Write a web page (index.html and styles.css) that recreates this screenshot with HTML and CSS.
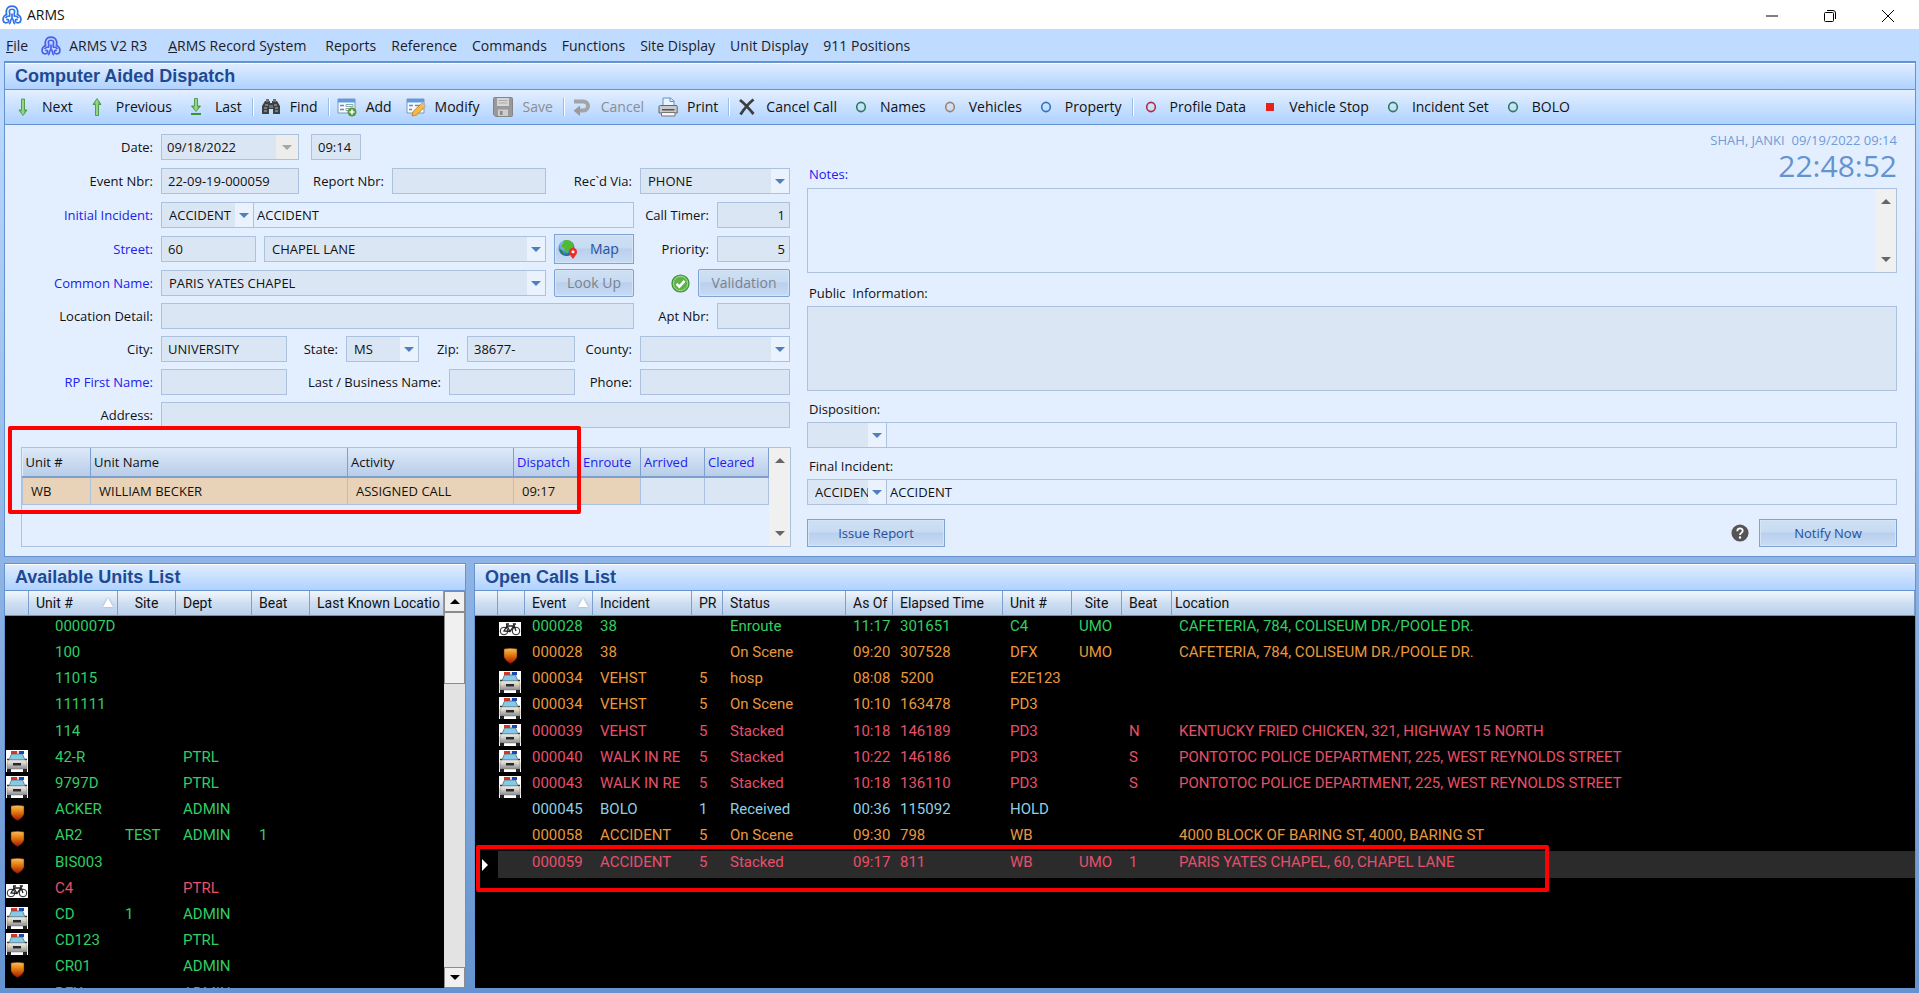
FILE: index.html
```html
<!DOCTYPE html>
<html lang="en">
<head>
    <meta charset="UTF-8">
    <meta name="viewport" content="width=device-width, initial-scale=1.0">
    <title>ARMS</title>
    <link rel="stylesheet" href="styles.css">
</head>
<body>
    <!-- icon sprites -->
    <svg class="sprites" aria-hidden="true">
        <defs>
            <linearGradient id="gShield" x1="0" y1="0" x2="0" y2="1">
                <stop offset="0" stop-color="#ffc05a"/><stop offset=".45" stop-color="#e07a10"/><stop offset="1" stop-color="#a81000"/>
            </linearGradient>
            <linearGradient id="gGreen" x1="0" y1="0" x2="1" y2="0">
                <stop offset="0" stop-color="#3f9c3a"/><stop offset=".5" stop-color="#a5dc8e"/><stop offset="1" stop-color="#2f8a2c"/>
            </linearGradient>
            <linearGradient id="gCar" x1="0" y1="0" x2="0" y2="1">
                <stop offset="0" stop-color="#f4f4f4"/><stop offset="1" stop-color="#8e8e8e"/>
            </linearGradient>
            <radialGradient id="gGlobe" cx=".4" cy=".3" r=".8">
                <stop offset="0" stop-color="#bfe3ff"/><stop offset=".6" stop-color="#3a8ad6"/><stop offset="1" stop-color="#0f4580"/>
            </radialGradient>
        </defs>
        <symbol id="logo" viewBox="0 0 20 20">
            <g fill="none" stroke="currentColor" stroke-width="1.7" stroke-linecap="round">
                <path d="M4.500 9.500C3.300 4 6 1.200 10 1.200S16.700 4 15.500 9.500"/>
                <path d="M7.500 11C8.500 8.500 7 7.500 7.500 5.500 8 3.800 12 3.800 12.500 5.500 13 7.500 11.500 8.500 12.500 11"/>
                <path d="M4.500 9.500C2 10.500 .8 13 1.200 15.500c.5 2.500 3.500 3 5 1.500 1-1.200.2-3-1.200-2.500"/>
                <path d="M15.500 9.500c2.500 1 3.700 3.500 3.300 6-.5 2.500-3.500 3-5 1.500-1-1.200-.2-3 1.200-2.500"/>
                <path d="M7.500 11C5.500 11 4.500 11.500 4 12.500M12.500 11c2 0 3 .5 3.500 1.500"/>
                <path d="M10 9v4.500M10 13.500C8 14 9 17.500 7.500 18.500M10 13.500c2 .5 1 4 2.500 5"/>
            </g>
        </symbol>
        <symbol id="down" viewBox="0 0 20 20"><path d="M8.500 2h3v11h2.500L10 18.500 6 13h2.500z" fill="url(#gGreen)" stroke="#3b9138" stroke-width=".8"/></symbol>
        <symbol id="up" viewBox="0 0 20 20"><path d="M8.500 18.500h3V7.500H14L10 1.500 6 7.500h2.500z" fill="url(#gGreen)" stroke="#3b9138" stroke-width=".8"/></symbol>
        <symbol id="last" viewBox="0 0 20 20"><path d="M8.500 1.500h3V9H14.500L10 14.500 5.500 9h3z" fill="url(#gGreen)" stroke="#3b9138" stroke-width=".8"/><path d="M5 16h10v2H5z" fill="#3b9138"/></symbol>
        <symbol id="find" viewBox="0 0 20 20">
            <path d="M4 4h5v2h2V4h5l3 5v8h-7v-5H8v5H1V9z" fill="#3c4043"/>
            <path d="M5 2h3v3H5zM12 2h3v3h-3zM8 8h4v3H8z" fill="#6d7276"/>
            <path d="M4 8h3M13 8h3M3 11h3M14 11h3M3 14h3M14 14h3" stroke="#b4b9bd" stroke-width="1.200"/>
        </symbol>
        <symbol id="add" viewBox="0 0 20 20">
            <path d="M1 2h17v14H1z" fill="#f7faff" stroke="#7a96bb"/><path d="M1 2h17v3.500H1z" fill="#5f9be0"/>
            <path d="M3 8.500h4M3 12.500h4" stroke="#7089ad" stroke-width="1.500"/><path d="M9 7.500h7v2H9zM9 11.500h4v2H9z" fill="#fff" stroke="#8aa"/>
            <circle cx="15" cy="15" r="4.500" fill="#5a9a3e"/><path d="M15 12.500v5M12.500 15h5" stroke="#fff" stroke-width="1.700"/>
        </symbol>
        <symbol id="modify" viewBox="0 0 20 20">
            <path d="M1 2h17v14H1z" fill="#f7faff" stroke="#7a96bb"/><path d="M1 2h17v3.500H1z" fill="#5f9be0"/>
            <path d="M3 8.500h4M3 12.500h3M9 8.500h5" stroke="#7089ad" stroke-width="1.500"/>
            <path d="M6 19l1.200-4.500L16 6l3.500 3.200L10.500 18z" fill="#f6bb3e" stroke="#b9771b" stroke-width=".8"/><path d="M16 6l3.500 3.200-1.600 1.500L14.400 7.500z" fill="#e9b7a0"/>
        </symbol>
        <symbol id="save" viewBox="0 0 20 20">
            <path d="M.5 1.500Q.5.500 1.500.5h17q1 0 1 1v17q0 1-1 1h-16l-2-2z" fill="#999" stroke="#858585"/><path d="M4 1h12v8H4z" fill="#d6d6d6"/><path d="M5.500 3.500h9M5.500 6h9" stroke="#aaa"/><path d="M5 12.500h10V19H5z" fill="#ccc"/><path d="M7 14h2.500v4H7z" fill="#888"/>
        </symbol>
        <symbol id="undo" viewBox="0 0 20 20"><path d="M2 4.500h9.500a4.500 4.500 0 0 1 0 9H7" fill="none" stroke="#a3a3a3" stroke-width="4"/><path d="M8 8.500v10.500L1.500 13.700z" fill="#9a9a9a"/></symbol>
        <symbol id="print" viewBox="0 0 20 20">
            <path d="M5 9V1h7.500L16 4v5z" fill="#eaf4ff" stroke="#5b93cf"/><path d="M12 1v3.500h4" fill="none" stroke="#5b93cf"/>
            <path d="M1 9.500q0-1 1.500-1h15.500q1.200 0 1.200 1V16H1z" fill="#c9c9c9" stroke="#666"/><path d="M4 12h12.500v1.500H4z" fill="#555"/><path d="M3.500 15.500h13.500v3.500H3.500z" fill="#f6f6f6" stroke="#777"/>
        </symbol>
        <symbol id="cross" viewBox="0 0 20 20"><path d="M3 3c5 4 9 8.500 13.500 14M16.500 2.500C11 7 7 12 3.500 17.500" fill="none" stroke="#3d3d3d" stroke-width="2.800"/></symbol>
        <symbol id="ring" viewBox="0 0 20 20"><ellipse cx="10" cy="10" rx="4.300" ry="4.600" fill="none" stroke="currentColor" stroke-width="1.600"/></symbol>
        <symbol id="stop" viewBox="0 0 20 20"><path d="M6 6h8v8H6z" fill="#e8201c"/></symbol>
        <symbol id="globe" viewBox="0 0 20 20">
            <circle cx="8.500" cy="9" r="8" fill="url(#gGlobe)"/>
            <path d="M6 1.500c4-1.500 9 1 10 5l-2 3-3 1-1 4-3-2-1-3-3-2z" fill="#52b935"/><path d="M1.500 10l3 2 1 4c-2-1-4-3-4-6z" fill="#2e7d32"/>
            <path d="M15 20c-2.500-3.500-4-5-4-7a4 4 0 0 1 8 0c0 2-1.500 3.500-4 7z" fill="#ef2b24"/><circle cx="15" cy="12.800" r="1.500" fill="#fff"/>
        </symbol>
        <symbol id="check" viewBox="0 0 20 20"><circle cx="10" cy="10" r="9" fill="#5db24a" stroke="#3f8f35" stroke-width="1.200"/><circle cx="10" cy="10" r="7.500" fill="none" stroke="#a9dc98"/><path d="M5.800 10.300l3 3 5.500-6" fill="none" stroke="#fff" stroke-width="2.600"/></symbol>
        <symbol id="help" viewBox="0 0 20 20"><circle cx="10" cy="10" r="9.500" fill="#555"/><path d="M7 8c0-4 6-4 6-.5 0 2.500-3 2.200-3 4.700" fill="none" stroke="#fff" stroke-width="2"/><circle cx="10" cy="15" r="1.300" fill="#fff"/></symbol>
        <symbol id="car" viewBox="0 0 22 22">
            <path d="M0 0h22v22H0z" fill="#fff"/>
            <path d="M5 1h6v3H5z" fill="#e0331f"/><path d="M11 1h2v3h-2z" fill="#dde"/><path d="M13 1h5v3h-5z" fill="#1646b8"/>
            <path d="M5.500 4h11l2.500 6H3z" fill="#86cbe6" stroke="#48606c" stroke-width=".7"/>
            <path d="M1 9.500h2M19 9.500h2" stroke="#333" stroke-width="1.500"/>
            <path d="M2.500 10h17l1.500 3v6H1v-6z" fill="url(#gCar)" stroke="#777" stroke-width=".5"/>
            <path d="M7 13h8v2.500H7z" fill="#2a2a2a"/><path d="M2 12.500h3v1.500H2zM17 12.500h3v1.500h-3z" fill="#f4d489"/>
            <path d="M1 19h4v3H1zM17 19h4v3h-4z" fill="#222"/>
        </symbol>
        <symbol id="shield" viewBox="0 0 22 22"><path d="M5 4q6.500-1.500 13 0v8q-1.500 4-6.500 6.500Q6.500 16 5 12z" fill="url(#gShield)" stroke="#55230a" stroke-width=".5"/></symbol>
        <symbol id="bike" viewBox="0 0 22 22">
            <path d="M0 3h22v14H0z" fill="#fff"/>
            <g fill="none" stroke="#222"><circle cx="5" cy="12" r="3.800"/><circle cx="17" cy="12" r="3.800"/><path d="M5 12L8 7h7l-4 5.500zM8 7l3 5.500M7 5h3M17 12L14.500 5H17M8 7L7.500 5" stroke-width="1.300"/></g>
        </symbol>
    </svg>

    <header class="titlebar">
        <svg class="logo logo-blue"><use href="#logo"/></svg>
        <span class="app-name">ARMS</span>
        <div class="window-buttons">
            <button aria-label="Minimize"><svg viewBox="0 0 14 14"><path d="M1 7h12"/></svg></button>
            <button aria-label="Restore"><svg viewBox="0 0 14 14"><path d="M1.500 4.500q0-1 1-1h7q1 0 1 1v7q0 1-1 1h-7q-1 0-1-1zM4 1.500h6q2.500 0 2.500 2.500v6"/></svg></button>
            <button aria-label="Close"><svg viewBox="0 0 14 14"><path d="M1 1l12 12M13 1L1 13"/></svg></button>
        </div>
    </header>

    <nav class="menubar">
        <a href="#"><u>F</u>ile</a>
        <a href="#" class="menu-arms"><svg class="logo logo-violet"><use href="#logo"/></svg>ARMS V2 R3</a>
        <a href="#" class="menu-records"><u>A</u>RMS Record System</a>
        <a href="#">Reports</a>
        <a href="#">Reference</a>
        <a href="#">Commands</a>
        <a href="#">Functions</a>
        <a href="#">Site Display</a>
        <a href="#">Unit Display</a>
        <a href="#">911 Positions</a>
    </nav>

    <main class="workspace">
        <section class="panel dispatch">
            <h1 class="panel-title">Computer Aided Dispatch</h1>
            <div class="toolbar">
                <button><svg><use href="#down"/></svg>Next</button>
                <button><svg><use href="#up"/></svg>Previous</button>
                <button><svg><use href="#last"/></svg>Last</button>
                <span class="sep"></span>
                <button><svg><use href="#find"/></svg>Find</button>
                <span class="sep"></span>
                <button><svg><use href="#add"/></svg>Add</button>
                <button><svg><use href="#modify"/></svg>Modify</button>
                <button disabled><svg><use href="#save"/></svg>Save</button>
                <span class="sep"></span>
                <button disabled><svg><use href="#undo"/></svg>Cancel</button>
                <button><svg><use href="#print"/></svg>Print</button>
                <span class="sep"></span>
                <button><svg><use href="#cross"/></svg>Cancel Call</button>
                <button><svg class="ring-green"><use href="#ring"/></svg>Names</button>
                <button><svg class="ring-brown"><use href="#ring"/></svg>Vehicles</button>
                <button><svg class="ring-blue"><use href="#ring"/></svg>Property</button>
                <span class="sep"></span>
                <button><svg class="ring-red"><use href="#ring"/></svg>Profile Data</button>
                <button><svg><use href="#stop"/></svg>Vehicle Stop</button>
                <button><svg class="ring-green"><use href="#ring"/></svg>Incident Set</button>
                <button><svg class="ring-green"><use href="#ring"/></svg>BOLO</button>
            </div>

            <form class="call-form">
                <div class="call-left">
                    <div class="row">
                        <label class="first" for="date">Date:</label>
                        <span class="combo combo-date w-date"><select id="date" disabled><option>09/18/2022</option></select></span>
                        <input class="w-time" type="text" value="09:14" aria-label="Time">
                    </div>
                    <div class="row">
                        <label class="first" for="event">Event Nbr:</label>
                        <input class="w-date" id="event" type="text" value="22-09-19-000059">
                        <label class="lbl-report" for="report">Report Nbr:</label>
                        <input class="w-report" id="report" type="text">
                        <label class="grow" for="via">Rec`d Via:</label>
                        <span class="combo w-right"><select id="via"><option>PHONE</option></select></span>
                    </div>
                    <div class="row">
                        <label class="first link" for="incident">Initial Incident:</label>
                        <span class="joined w-long">
                            <span class="combo w-incident"><select id="incident"><option>ACCIDENT</option></select></span>
                            <input class="light" type="text" value="ACCIDENT" aria-label="Incident description">
                        </span>
                        <label class="grow" for="timer">Call Timer:</label>
                        <input class="w-small num" id="timer" type="text" value="1">
                    </div>
                    <div class="row">
                        <label class="first link" for="street">Street:</label>
                        <input class="w-street" id="street" type="text" value="60">
                        <span class="combo grow"><select aria-label="Street name"><option>CHAPEL LANE</option></select></span>
                        <button type="button" class="btn btn-map"><svg><use href="#globe"/></svg>Map</button>
                        <label class="lbl-side" for="priority">Priority:</label>
                        <input class="w-small num" id="priority" type="text" value="5">
                    </div>
                    <div class="row">
                        <label class="first link" for="common">Common Name:</label>
                        <span class="combo w-common"><select id="common"><option>PARIS YATES CHAPEL</option></select></span>
                        <button type="button" class="btn btn-lookup" disabled>Look Up</button>
                        <span class="grow valid"><svg><use href="#check"/></svg></span>
                        <button type="button" class="btn btn-validate" disabled>Validation</button>
                    </div>
                    <div class="row">
                        <label class="first" for="detail">Location Detail:</label>
                        <input class="w-long" id="detail" type="text">
                        <label class="grow" for="apt">Apt Nbr:</label>
                        <input class="w-small" id="apt" type="text">
                    </div>
                    <div class="row">
                        <label class="first" for="city">City:</label>
                        <input class="w-name" id="city" type="text" value="UNIVERSITY">
                        <label class="lbl-state" for="state">State:</label>
                        <span class="combo w-small"><select id="state"><option>MS</option></select></span>
                        <label class="lbl-zip" for="zip">Zip:</label>
                        <input class="w-zip" id="zip" type="text" value="38677-">
                        <label class="grow" for="county">County:</label>
                        <span class="combo w-right"><select id="county"><option></option></select></span>
                    </div>
                    <div class="row">
                        <label class="first link" for="rp">RP First Name:</label>
                        <input class="w-name" id="rp" type="text">
                        <label class="lbl-business" for="business">Last / Business Name:</label>
                        <input class="w-name" id="business" type="text">
                        <label class="grow" for="phone">Phone:</label>
                        <input class="w-right" id="phone" type="text">
                    </div>
                    <div class="row">
                        <label class="first" for="address">Address:</label>
                        <input class="grow" id="address" type="text">
                    </div>

                    <div class="assigned">
                        <div class="callout callout-unit"></div>
                        <table>
                            <colgroup><col class="a-unit"><col><col class="a-activity"><col class="a-dispatch"><col class="a-enroute"><col class="a-time"><col class="a-time"></colgroup>
                            <thead>
                                <tr><th>Unit #</th><th>Unit Name</th><th>Activity</th><th class="link">Dispatch</th><th class="link">Enroute</th><th class="link">Arrived</th><th class="link">Cleared</th></tr>
                            </thead>
                            <tbody>
                                <tr><td>WB</td><td>WILLIAM BECKER</td><td>ASSIGNED CALL</td><td>09:17</td><td></td><td class="empty"></td><td class="empty"></td></tr>
                            </tbody>
                        </table>
                        <div class="scroll-flat"><i class="tri-up"></i><i class="tri-down"></i></div>
                    </div>
                </div>

                <div class="call-right">
                    <div class="operator">SHAH, JANKI&nbsp; 09/19/2022 09:14</div>
                    <div class="clock-row">
                        <label class="link" for="notes">Notes:</label>
                        <span class="clock">22:48:52</span>
                    </div>
                    <div class="notes-box">
                        <textarea id="notes"></textarea>
                        <div class="scroll-flat"><i class="tri-up"></i><i class="tri-down"></i></div>
                    </div>
                    <label for="public">Public&nbsp; Information:</label>
                    <textarea class="public-info" id="public"></textarea>
                    <label for="disposition">Disposition:</label>
                    <span class="joined">
                        <span class="combo w-code"><select id="disposition"><option></option></select></span>
                        <input class="light" type="text" aria-label="Disposition description">
                    </span>
                    <label for="final">Final Incident:</label>
                    <span class="joined">
                        <span class="combo w-code"><select id="final"><option>ACCIDENT</option></select></span>
                        <input class="light" type="text" value="ACCIDENT" aria-label="Final incident description">
                    </span>
                    <div class="actions">
                        <button type="button" class="btn btn-wide">Issue Report</button>
                        <svg><use href="#help"/></svg>
                        <button type="button" class="btn btn-wide">Notify Now</button>
                    </div>
                </div>
            </form>
        </section>

        <div class="lists">
            <section class="panel units">
                <h2 class="panel-title">Available Units List</h2>
                <div class="list-body">
                    <div class="list-view">
                        <table class="list" id="unitsTable">
                            <colgroup><col class="u-icon"><col class="u-unit"><col class="u-site"><col class="u-dept"><col class="u-beat"><col></colgroup>
                            <thead>
                                <tr><th></th><th>Unit #<i class="sort"></i></th><th class="center">Site</th><th>Dept</th><th>Beat</th><th>Last Known Locatio</th></tr>
                            </thead>
                            <tbody></tbody>
                        </table>
                    </div>
                    <div class="scrollbar">
                        <button aria-label="Scroll up"><i class="tri-up"></i></button>
                        <span class="thumb"></span>
                        <button aria-label="Scroll down"><i class="tri-down"></i></button>
                    </div>
                </div>
            </section>

            <section class="panel calls">
                <h2 class="panel-title">Open Calls List</h2>
                <div class="list-body">
                    <div class="list-view">
                        <table class="list" id="callsTable">
                            <colgroup><col class="c-mark"><col class="c-icon"><col class="c-event"><col class="c-incident"><col class="c-pr"><col class="c-status"><col class="c-asof"><col class="c-elapsed"><col class="c-unit"><col class="c-site"><col class="c-site"><col></colgroup>
                            <thead>
                                <tr><th></th><th></th><th>Event<i class="sort"></i></th><th>Incident</th><th>PR</th><th>Status</th><th>As Of</th><th>Elapsed Time</th><th>Unit #</th><th class="center">Site</th><th>Beat</th><th>Location</th></tr>
                            </thead>
                            <tbody></tbody>
                        </table>
                    </div>
                </div>
                <div class="callout callout-call"></div>
            </section>
        </div>
    </main>

    <script>
        // color, icon, unit, site, dept, beat, last location
        const units = [
            ['green', '', '000007D', '', '', '', ''],
            ['green', '', '100', '', '', '', ''],
            ['green', '', '11015', '', '', '', ''],
            ['green', '', '111111', '', '', '', ''],
            ['green', '', '114', '', '', '', ''],
            ['green', 'car', '42-R', '', 'PTRL', '', ''],
            ['green', 'car', '9797D', '', 'PTRL', '', ''],
            ['green', 'shield', 'ACKER', '', 'ADMIN', '', ''],
            ['green', 'shield', 'AR2', 'TEST', 'ADMIN', '1', ''],
            ['green', 'shield', 'BIS003', '', '', '', ''],
            ['red', 'bike', 'C4', '', 'PTRL', '', ''],
            ['green', 'car', 'CD', '1', 'ADMIN', '', ''],
            ['green', 'car', 'CD123', '', 'PTRL', '', ''],
            ['green', 'shield', 'CR01', '', 'ADMIN', '', ''],
            ['red', '', 'DFX', '', 'ADMIN', '', '']
        ];

        // color, icon, event, incident, pr, status, as of, elapsed, unit, site, beat, location
        const calls = [
            ['green', 'bike', '000028', '38', '', 'Enroute', '11:17', '301651', 'C4', 'UMO', '', 'CAFETERIA, 784, COLISEUM DR./POOLE DR.'],
            ['orange', 'shield', '000028', '38', '', 'On Scene', '09:20', '307528', 'DFX', 'UMO', '', 'CAFETERIA, 784, COLISEUM DR./POOLE DR.'],
            ['orange', 'car', '000034', 'VEHST', '5', 'hosp', '08:08', '5200', 'E2E123', '', '', ''],
            ['orange', 'car', '000034', 'VEHST', '5', 'On Scene', '10:10', '163478', 'PD3', '', '', ''],
            ['red', 'car', '000039', 'VEHST', '5', 'Stacked', '10:18', '146189', 'PD3', '', 'N', 'KENTUCKY FRIED CHICKEN, 321, HIGHWAY 15 NORTH'],
            ['red', 'car', '000040', 'WALK IN RE', '5', 'Stacked', '10:22', '146186', 'PD3', '', 'S', 'PONTOTOC POLICE DEPARTMENT, 225, WEST REYNOLDS STREET'],
            ['red', 'car', '000043', 'WALK IN RE', '5', 'Stacked', '10:18', '136110', 'PD3', '', 'S', 'PONTOTOC POLICE DEPARTMENT, 225, WEST REYNOLDS STREET'],
            ['cyan', '', '000045', 'BOLO', '1', 'Received', '00:36', '115092', 'HOLD', '', '', ''],
            ['orange', '', '000058', 'ACCIDENT', '5', 'On Scene', '09:30', '798', 'WB', '', '', '4000 BLOCK OF BARING ST, 4000, BARING ST'],
            ['red selected', '', '000059', 'ACCIDENT', '5', 'Stacked', '09:17', '811', 'WB', 'UMO', '1', 'PARIS YATES CHAPEL, 60, CHAPEL LANE']
        ];

        function renderRows(tableId, rows, marker) {
            const tbody = document.getElementById(tableId).querySelector('tbody');
            rows.forEach(([color, icon, ...cells]) => {
                const row = document.createElement('tr');
                row.className = color;
                row.innerHTML = `
                    ${marker ? '<td class="marker"></td>' : ''}
                    <td class="icon">${icon ? `<svg><use href="#${icon}"/></svg>` : ''}</td>
                    ${cells.map(c => `<td>${c}</td>`).join('')}
                `;
                tbody.appendChild(row);
            });
        }

        renderRows('unitsTable', units, false);
        renderRows('callsTable', calls, true);
    </script>
</body>
</html>
```

FILE: styles.css
```css
* {
    box-sizing: border-box;
}
body {
    margin: 0;
    height: 100vh;
    display: flex;
    flex-direction: column;
    overflow: hidden;
    font-family: "Open Sans", "Noto Sans", sans-serif;
    font-size: 13px;
    line-height: 18px;
    color: #111;
    background: linear-gradient(#bfdbff 60px, #6593cf);
}
button, input, select, textarea {
    font: inherit;
    color: inherit;
    margin: 0;
}
.sprites {
    position: absolute;
    width: 0;
    height: 0;
}

/* title bar and menu */
.titlebar {
    display: flex;
    align-items: center;
    gap: 5px;
    height: 29px;
    padding-left: 2px;
    background: #fff;
    font-size: 14px;
}
.logo {
    width: 20px;
    height: 20px;
}
.logo-blue {
    color: #2f74e8;
}
.logo-violet {
    color: #4a5fe8;
}
.window-buttons {
    display: flex;
    gap: 18px;
    margin-left: auto;
    padding-right: 11px;
}
.window-buttons button {
    width: 40px;
    height: 28px;
    padding: 0;
    border: none;
    background: none;
}
.window-buttons svg {
    width: 14px;
    height: 14px;
    fill: none;
    stroke: #000;
    stroke-width: 1;
    vertical-align: middle;
}
.menubar {
    display: flex;
    align-items: center;
    gap: 15px;
    height: 32px;
    padding: 2px 0 0 6px;
    background: #bfdbff;
    font-size: 14px;
}
.menubar a {
    color: #1c1c28;
    text-decoration: none;
}
.menubar .menu-arms {
    display: flex;
    align-items: center;
    gap: 8px;
    margin: 0 6px 0 -2px;
}
.menubar .menu-records {
    margin-right: 4px;
}

/* panels */
.workspace {
    flex: 1;
    min-height: 0;
    display: flex;
    flex-direction: column;
    gap: 6px;
    padding: 0 3px 4px 4px;
}
.panel {
    border: 1px solid #6593cf;
    background: #e3efff;
}
.panel-title {
    margin: 0;
    height: 27px;
    padding-left: 10px;
    border-top: 1px solid #fff;
    border-bottom: 1px solid #6593cf;
    background: linear-gradient(#dfecff, #afd2ff);
    font: bold 18px/25px "Liberation Sans", Arial, sans-serif;
    color: #1e4a93;
}
.dispatch {
    border-top-width: 2px;
}
.toolbar {
    display: flex;
    align-items: center;
    height: 35px;
    padding-left: 8px;
    border-bottom: 1px solid #6593cf;
    background: linear-gradient(#e3efff, #afd2ff);
    font-size: 14px;
}
.toolbar button {
    display: flex;
    align-items: center;
    gap: 9px;
    margin-right: 14px;
    padding: 0;
    border: none;
    background: none;
    white-space: nowrap;
}
.toolbar button:disabled {
    color: #8d8d8d;
}
.toolbar svg {
    width: 20px;
    height: 20px;
}
.toolbar .sep {
    width: 2px;
    height: 18px;
    margin: 0 7px 0 -4px;
    border-left: 1px solid #9abde8;
    background: #fff;
}
.ring-green { color: #2b7d55; }
.ring-brown { color: #a5816a; }
.ring-blue { color: #2f74c0; }
.ring-red { color: #b52a3a; }

/* call form */
.call-form {
    display: grid;
    grid-template-columns: 770px 1fr;
    gap: 16px;
    padding: 9px 18px 9px 16px;
}
.call-left {
    display: flex;
    flex-direction: column;
    gap: 7px;
}
.row {
    display: flex;
    align-items: center;
    gap: 8px;
    height: 26px;
    padding-right: 1px;
}
.row:nth-child(-n+4) {
    margin-bottom: 1px;
}
label {
    white-space: nowrap;
    flex: none;
}
.row label {
    text-align: right;
}
.link {
    color: #2020f0;
}
.row .first { width: 132px; }
.row .grow { flex: 1; min-width: 0; }
.lbl-report { width: 77px; }
.lbl-side { width: 67px; }
.lbl-state { width: 43px; }
.lbl-zip { width: 32px; }
.lbl-business { width: 146px; }
input, textarea, select {
    border: 1px solid #abc1de;
    border-radius: 0;
    background: #dbe6f5;
    outline: none;
}
input {
    flex: none;
    height: 26px;
    min-width: 0;
    padding: 0 6px;
}
.w-date { width: 138px; }
.w-time { width: 50px; margin-left: 4px; }
.w-report { width: 154px; }
.w-right { width: 150px; }
.w-long { width: 473px; }
.w-incident { width: 93px; }
.w-small { width: 73px; }
.w-street { width: 95px; }
.w-common { width: 385px; }
.w-name { width: 126px; }
.w-zip { width: 108px; }
.w-code { width: 80px; }
.num {
    padding-right: 4px;
    text-align: right;
}
.combo {
    position: relative;
    display: block;
    flex: none;
    height: 26px;
}
.combo select {
    appearance: none;
    width: 100%;
    height: 26px;
    padding: 0 18px 0 7px;
    opacity: 1;
    background: linear-gradient(#e9f2fd, #e9f2fd) right / 18px 100% no-repeat #dbe6f5;
}
.combo::after {
    content: "";
    position: absolute;
    right: 5px;
    top: 11px;
    border: 5px solid transparent;
    border-top: 5px solid #4f7fbd;
    border-bottom: none;
    pointer-events: none;
}
.combo-date select {
    padding-left: 5px;
    background: linear-gradient(#ededed, #ededed) right / 22px 100% no-repeat #dbe6f5;
    color: #111;
}
.combo-date::after {
    right: 7px;
    border-top-color: #aaa69c;
}
.joined {
    display: flex;
    flex: none;
}
.joined .light {
    flex: 1;
    padding-left: 3px;
    border-left: none;
    background: #e3efff;
}
.btn {
    flex: none;
    height: 28px;
    padding: 0;
    border: 1px solid #7fa3d3;
    border-radius: 2px;
    background: linear-gradient(#cfe0f3 0%, #c8dbf2 45%, #b9cfec 50%, #c9dcf5 100%);
    box-shadow: inset 0 0 0 1px #d5e4f7;
    font-size: 14px;
    color: #27509b;
}
.btn:disabled {
    color: #7d828c;
}
.btn-map {
    display: flex;
    align-items: center;
    gap: 12px;
    width: 80px;
    height: 30px;
    padding-left: 3px;
    border-radius: 0;
}
.btn-map svg {
    width: 20px;
    height: 20px;
}
.btn-lookup { width: 80px; }
.btn-validate { width: 92px; }
.btn-wide {
    width: 138px;
    border-radius: 0;
    font-size: 13px;
}
.valid {
    display: flex;
    justify-content: flex-end;
}
.valid svg {
    width: 19px;
    height: 19px;
}

/* units assigned to the call */
.assigned {
    position: relative;
    display: flex;
    height: 100px;
    margin-top: 12px;
    border: 1px solid #abc1de;
}
.assigned table {
    flex: 1;
    height: 57px;
    table-layout: fixed;
    border-collapse: collapse;
}
.a-unit { width: 68px; }
.a-activity { width: 166px; }
.a-dispatch { width: 66px; }
.a-enroute { width: 61px; }
.a-time { width: 64px; }
.assigned th {
    height: 29px;
    padding: 0 3px;
    border-right: 1px solid #7d9fcd;
    border-bottom: 2px solid #7d9fcd;
    background: linear-gradient(#dce9f8, #b9cde9);
    font-weight: normal;
    text-align: left;
    white-space: nowrap;
}
.assigned td {
    padding: 0 8px;
    border: 1px solid #abc1de;
    background: #e9d3b8;
}
.assigned .empty {
    background: #dbe6f5;
}
.scroll-flat {
    display: flex;
    flex-direction: column;
    justify-content: space-between;
    align-items: center;
    width: 21px;
    padding: 10px 0;
    background: #f0f0f0;
}
.tri-up, .tri-down {
    display: block;
    border: 5px solid transparent;
}
.tri-up {
    border-top: none;
    border-bottom-color: #666;
}
.tri-down {
    border-bottom: none;
    border-top-color: #666;
}

/* right half of the form */
.call-right {
    display: flex;
    flex-direction: column;
}
.call-right > label {
    padding: 9px 2px 4px;
}
.operator {
    height: 18px;
    line-height: 12px;
    text-align: right;
    color: #6f9bd8;
}
.clock-row {
    display: flex;
    justify-content: space-between;
    align-items: flex-end;
    height: 36px;
    padding-left: 2px;
}
.clock-row label {
    padding-bottom: 5px;
}
.clock {
    font-size: 30px;
    line-height: 44px;
    color: #6593cf;
}
.notes-box {
    display: flex;
    height: 85px;
    margin-bottom: 2px;
    border: 1px solid #abc1de;
}
.notes-box textarea {
    flex: 1;
    border: none;
    background: #e3efff;
    resize: none;
}
.public-info {
    height: 85px;
    resize: none;
}
.actions {
    display: flex;
    align-items: center;
    gap: 10px;
    margin-top: 14px;
}
.actions svg {
    width: 18px;
    height: 18px;
    margin-left: auto;
}

/* unit and call lists */
.lists {
    flex: 1;
    min-height: 0;
    display: grid;
    grid-template-columns: 462px 1fr;
    gap: 8px;
}
.lists .panel {
    display: flex;
    flex-direction: column;
    min-width: 0;
    min-height: 0;
    position: relative;
}
.lists .panel-title {
    flex: none;
    padding-left: 10px;
}
.list-body {
    flex: 1;
    min-height: 0;
    display: flex;
    background: #000;
}
.list-view {
    flex: 1;
    min-width: 0;
    overflow: hidden;
}
.list {
    width: 100%;
    table-layout: fixed;
    border-collapse: separate;
    border-spacing: 0;
    font-family: Roboto, "Liberation Sans", sans-serif;
    font-size: 15px;
    line-height: 20px;
}
.list th {
    position: relative;
    height: 25px;
    padding: 0 0 0 7px;
    border-right: 1px solid #7d9fcd;
    border-bottom: 1px solid #6593cf;
    background: linear-gradient(#f2f7fd, #cfdff2 50%, #b9cfeb);
    font-size: 14px;
    font-weight: normal;
    text-align: left;
    white-space: nowrap;
    overflow: hidden;
}
.list th:last-child {
    padding-left: 3px;
}
#unitsTable th:last-child {
    padding-left: 7px;
}
.list .center {
    padding: 0;
    text-align: center;
}
.list td {
    height: 26px;
    padding: 0 0 6px 7px;
    white-space: nowrap;
    overflow: hidden;
}
.list tr:nth-child(5n) td {
    height: 27px;
}
.list .icon {
    padding: 2px 0 0 1px;
}
.list .icon svg {
    display: block;
    width: 22px;
    height: 22px;
}
#unitsTable td:nth-child(2) {
    padding-left: 26px;
}
.sort {
    position: absolute;
    right: 4px;
    top: 7px;
    border: 5px solid transparent;
    border-top: none;
    border-bottom: 9px solid #fff;
    filter: drop-shadow(0 0 1px #8fa6c6);
}
.u-icon { width: 24px; }
.u-unit { width: 89px; }
.u-site { width: 58px; }
.u-dept { width: 76px; }
.u-beat { width: 58px; }
.c-mark { width: 23px; }
.c-icon { width: 27px; }
.c-event { width: 68px; }
.c-incident { width: 99px; }
.c-pr { width: 31px; }
.c-status { width: 123px; }
.c-asof { width: 47px; }
.c-elapsed { width: 110px; }
.c-unit { width: 69px; }
.c-site { width: 50px; }
.green { color: #32cd64; }
.orange { color: #e8983f; }
.red { color: #e6506b; }
.cyan { color: #8fcfe4; }
.selected td {
    background: #2b2b2b;
}
.list .selected .marker {
    padding: 0 0 0 7px;
    background: #000;
}
.selected .marker::before {
    content: "";
    display: block;
    width: 0;
    border: 6px solid transparent;
    border-left-color: #fff;
    border-right: none;
}
.scrollbar {
    display: flex;
    flex-direction: column;
    flex: none;
    width: 21px;
    background: #e3e3e3;
}
.scrollbar button {
    display: flex;
    align-items: center;
    justify-content: center;
    width: 21px;
    height: 21px;
    padding: 0;
    border: 1px solid #8c8c8c;
    background: #f0f0f0;
}
.scrollbar button:last-child {
    margin-top: auto;
}
.scrollbar .tri-up { border-bottom-color: #000; }
.scrollbar .tri-down { border-top-color: #000; }
.thumb {
    height: 72px;
    border: 1px solid #8c8c8c;
    background: #f0f0f0;
}

/* red highlight frames */
.callout {
    position: absolute;
    border: 4px solid #f00;
    border-radius: 2px;
    pointer-events: none;
}
.callout-unit {
    left: -14px;
    top: -22px;
    width: 573px;
    height: 88px;
}
.callout-call {
    left: 1px;
    top: 281px;
    width: 1073px;
    height: 47px;
}
```
